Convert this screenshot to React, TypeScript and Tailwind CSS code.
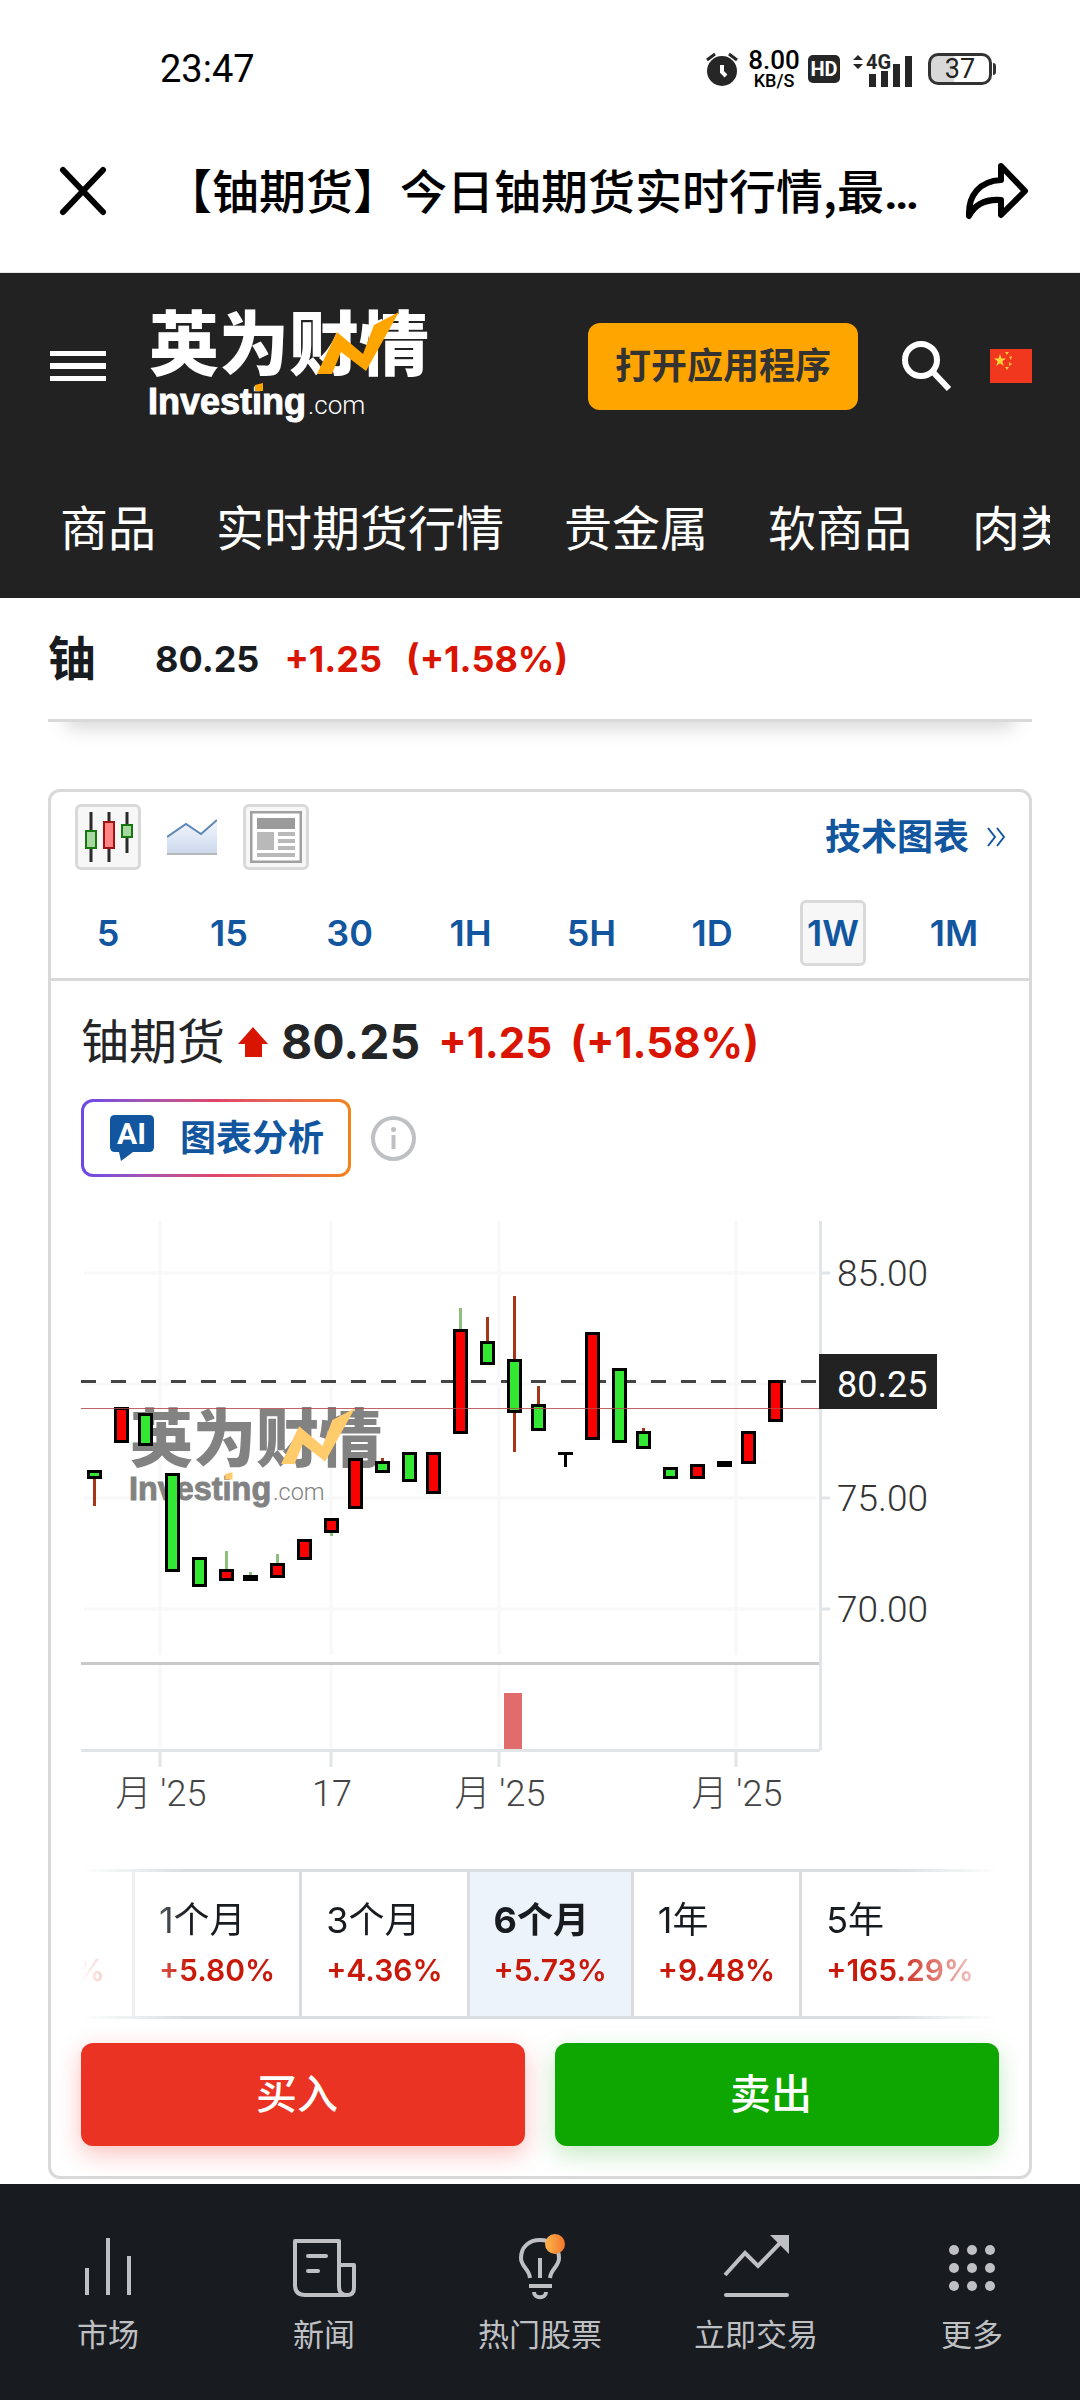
import React from "react";

type Candle = { x: number; top: number; bottom: number; kind: "up" | "down" | "flat"; wickTop?: number; wickBottom?: number; wick?: "green" | "red" | "black" };

const candles: Candle[] = [
  { x: 87, top: 1470, bottom: 1479, kind: "down", wickBottom: 1506, wick: "red" },
  { x: 114, top: 1407, bottom: 1443, kind: "up" },
  { x: 138, top: 1413, bottom: 1446, kind: "down" },
  { x: 165, top: 1473, bottom: 1572, kind: "down" },
  { x: 192, top: 1557, bottom: 1587, kind: "down" },
  { x: 219, top: 1569, bottom: 1581, kind: "up", wickTop: 1551, wick: "green" },
  { x: 243, top: 1575, bottom: 1581, kind: "flat", wickTop: 1572, wick: "green" },
  { x: 270, top: 1563, bottom: 1578, kind: "up", wickTop: 1554, wick: "green" },
  { x: 297, top: 1539, bottom: 1560, kind: "up" },
  { x: 324, top: 1518, bottom: 1533, kind: "up", wickBottom: 1536, wick: "green" },
  { x: 348, top: 1458, bottom: 1509, kind: "up" },
  { x: 375, top: 1461, bottom: 1473, kind: "down", wickTop: 1458, wick: "red" },
  { x: 402, top: 1452, bottom: 1482, kind: "down" },
  { x: 426, top: 1452, bottom: 1494, kind: "up" },
  { x: 453, top: 1329, bottom: 1434, kind: "up", wickTop: 1308, wick: "green" },
  { x: 480, top: 1341, bottom: 1365, kind: "down", wickTop: 1317, wick: "red" },
  { x: 507, top: 1359, bottom: 1413, kind: "down", wickTop: 1296, wickBottom: 1452, wick: "red" },
  { x: 531, top: 1404, bottom: 1431, kind: "down", wickTop: 1386, wick: "red" },
  { x: 558, top: 1452, bottom: 1455, kind: "flat", wickBottom: 1467, wick: "black" },
  { x: 585, top: 1332, bottom: 1440, kind: "up" },
  { x: 612, top: 1368, bottom: 1443, kind: "down" },
  { x: 636, top: 1431, bottom: 1449, kind: "down", wickTop: 1428, wick: "red" },
  { x: 663, top: 1467, bottom: 1479, kind: "down" },
  { x: 690, top: 1464, bottom: 1479, kind: "up" },
  { x: 717, top: 1461, bottom: 1467, kind: "flat" },
  { x: 741, top: 1431, bottom: 1464, kind: "up" },
  { x: 768, top: 1380, bottom: 1422, kind: "up" },
];

const wickColor = { green: "#8fbf7c", red: "#a5361a", black: "#000" };

function LogoArt({ ink, accent }: { ink: string; accent: string }) {
  return (
    <>
      <text x="1" y="65" fontSize="70" fontWeight="900" fill={ink} fontFamily="'Noto Sans CJK SC', sans-serif">
        英为财情
      </text>
      <path d="M169 69L189 27L215 49L226 20L251 7L218 66L193 47L184 69Z" fill={accent} />
      <text x="0" y="109" fontSize="36" fontWeight="700" fill={ink} stroke={ink} strokeWidth="1" fontFamily="'Liberation Sans', sans-serif">
        Investing
      </text>
      <path d="M107 80L115 78V86H107Z" fill={accent} />
      <text x="160" y="109" fontSize="26" fontWeight="300" fill={ink} fontFamily="Roboto, sans-serif">
        .com
      </text>
    </>
  );
}

function StatusBar() {
  return (
    <div className="flex h-[110px] items-center justify-between pt-7 pr-[84px] pl-40 font-[Roboto,sans-serif] text-[#222]">
      <span className="text-[38px] leading-none text-black">23:47</span>
      <div className="flex items-center gap-2">
        <svg className="h-9 w-9" viewBox="0 0 36 36" fill="none" aria-label="闹钟">
          <circle cx="18" cy="20" r="15" fill="#262626" />
          <path d="M18 14V21L22 25" stroke="#fff" strokeWidth="4" />
          <path d="M3 9L11 3M33 9L25 3" stroke="#262626" strokeWidth="3" />
        </svg>
        <div className="flex w-[52px] flex-col items-center font-medium text-black">
          <span className="text-[26px] leading-[24px]">8.00</span>
          <span className="text-lg leading-[18px]">KB/S</span>
        </div>
        <span className="flex h-7 w-8 items-center justify-center rounded-[5px] bg-[#262626] text-xl font-bold text-white">HD</span>
        <svg className="h-9 w-16" viewBox="0 0 64 36" aria-label="4G 信号">
          <path d="M5 9L10 4L15 9ZM5 13L10 18L15 13Z" fill="#262626" />
          <path d="M21 23H28V36H21ZM33 20H40V36H33ZM45 13H52V36H45ZM57 5H64V36H57Z" fill="#262626" />
          <text x="18" y="18" fontSize="20" fontWeight="700" fill="#262626" fontFamily="Roboto, sans-serif">4G</text>
        </svg>
        <div className="ml-2 flex items-center gap-px">
          <div className="flex h-8 w-16 items-center justify-center rounded-[10px] border-3 border-[#333] bg-linear-to-r from-[#d8d8d8] from-40% to-white to-40% text-[27px] leading-none">37</div>
          <div className="h-3 w-[3px] rounded-r bg-[#333]" />
        </div>
      </div>
    </div>
  );
}

function TitleBar() {
  return (
    <div className="flex h-[163px] items-center border-b border-[#e5e5e5] pr-[48px] pl-[57px]">
      <button aria-label="关闭" className="shrink-0">
        <svg className="h-[52px] w-[52px]" viewBox="0 0 52 52" stroke="#000" strokeWidth="6" strokeLinecap="round">
          <path d="M6 5L46 47M46 5L6 47" />
        </svg>
      </button>
      <h1 className="ml-[56px] grow font-['Noto_Sans_CJK_SC',sans-serif] text-[47px] leading-[70px] font-medium whitespace-nowrap text-black">
        【铀期货】今日铀期货实时行情,最<span className="font-[Roboto,sans-serif] font-bold">…</span>
      </h1>
      <button aria-label="分享" className="shrink-0">
        <svg className="h-[60px] w-[68px]" viewBox="0 0 68 60" fill="none" stroke="#000" strokeWidth="6" strokeLinejoin="round">
          <path d="M37 5L61 30L37 54V39C22 38 11 43 5 55C4 34 16 20 37 19Z" />
        </svg>
      </button>
    </div>
  );
}

function SiteHeader() {
  return (
    <header className="bg-[#222] text-white">
      <div className="flex h-[186px] items-center pr-12 pl-[50px]">
        <button aria-label="菜单" className="flex w-14 flex-col gap-[7px]">
          <span className="h-[5px] w-full bg-white" />
          <span className="h-[6px] w-full bg-white" />
          <span className="h-[5px] w-full bg-white" />
        </button>
        <a href="#" aria-label="英为财情 Investing.com" className="ml-[42px]">
          <svg className="h-[122px] w-[280px] overflow-visible" viewBox="0 0 280 122">
            <LogoArt ink="#fff" accent="#ffa500" />
          </svg>
        </a>
        <button className="ml-auto h-[87px] w-[270px] rounded-xl bg-[#ffa500] text-4xl font-bold text-[#333]">打开应用程序</button>
        <button aria-label="搜索" className="ml-[43px]">
          <svg className="h-[52px] w-[52px]" viewBox="0 0 52 52" fill="none" stroke="#fff">
            <circle cx="20" cy="20" r="16" strokeWidth="6" />
            <path d="M32 32L48 49" strokeWidth="6" />
          </svg>
        </button>
        <a href="#" aria-label="中国" className="ml-[37px]">
          <svg className="h-[34px] w-[42px]" viewBox="0 0 42 34">
            <rect width="42" height="34" fill="#f2371f" />
            <path d="M10 5L11.500 9.500H16L12.300 12.200L13.700 17L10 14.200L6.300 17L7.700 12.200L4 9.500H8.500Z" fill="#ffd93b" />
            <g fill="#ffc83b">
              <path d="M15 3L19 3L17 6ZM19 8L22 7L21 11ZM19 13L22 15L19 17ZM15 18L19 18L17 21Z" />
            </g>
          </svg>
        </a>
      </div>
      <nav className="mr-[30px] flex h-[139px] items-center gap-15 overflow-hidden pl-15 text-5xl whitespace-nowrap">
        {["商品", "实时期货行情", "贵金属", "软商品", "肉类"].map((t) => (
          <a href="#" key={t} className="shrink-0 leading-[72px]">{t}</a>
        ))}
      </nav>
    </header>
  );
}

function Ticker() {
  return (
    <div className="mx-12 flex h-[124px] items-center border-b-3 border-[#d9d9d9] text-4xl font-bold shadow-[0_24px_18px_-18px_rgba(0,0,0,0.16)]">
      <span className="text-5xl text-[#181c21]">铀</span>
      <span className="ml-[59px] text-[#181c21]">80.25</span>
      <span className="ml-[25px] text-[#d91400]">+1.25</span>
      <span className="ml-6 text-[#d91400]">(+1.58%)</span>
    </div>
  );
}

function ChartTools() {
  const box = "flex h-[66px] w-[66px] items-center justify-center rounded-md border-3 border-[#d9d9d9] bg-[#f7f7f7]";
  return (
    <div className="border-b-3 border-[#d9d9d9] pt-3 pb-3 pl-6">
      <div className="flex items-center gap-[18px] pr-6">
        <button aria-label="蜡烛图" className={box}>
          <svg className="h-[54px] w-[54px]" viewBox="0 0 54 54">
            <path d="M10 2V52M28 2V52M46 2V43" stroke="#2b2b2b" strokeWidth="3" />
            <g strokeWidth="2">
              <rect x="5" y="21" width="10" height="17" fill="#a8d8a2" stroke="#14780e" />
              <rect x="23" y="12" width="10" height="26" fill="#ff8585" stroke="#a31212" />
              <rect x="41" y="15" width="10" height="12" fill="#a8d8a2" stroke="#14780e" />
            </g>
          </svg>
        </button>
        <button aria-label="面积图" className="flex h-[66px] w-[66px] items-center justify-center">
          <svg className="h-9 w-[50px]" viewBox="0 0 50 36">
            <defs>
              <linearGradient id="area" x1="0" y1="0" x2="0" y2="1">
                <stop offset="0" stopColor="#f4f7fd" />
                <stop offset="1" stopColor="#cdd9ee" />
              </linearGradient>
            </defs>
            <path d="M0 18L19 5L34 15L50 1V34H0Z" fill="url(#area)" />
            <path d="M0 18L19 5L34 15L50 1" fill="none" stroke="#5b87b5" strokeWidth="2" />
            <path d="M0 35H50" stroke="#b8b8b8" strokeWidth="2" />
          </svg>
        </button>
        <button aria-label="新闻" className={box}>
          <svg className="h-[52px] w-[52px]" viewBox="0 0 52 52">
            <rect x="1" y="1" width="50" height="50" fill="#fff" stroke="#a0a0a0" strokeWidth="3" />
            <rect x="7" y="7" width="38" height="11" fill="#9b9b9b" />
            <path d="M7 21H24V39H7ZM28 21H45V25H28ZM28 28H45V32H28ZM28 35H45V39H28ZM7 42H45V46H7Z" fill="#b9b9b9" />
          </svg>
        </button>
        <a href="#" className="ml-auto flex items-center gap-[18px] text-4xl font-bold text-[#1256a0]">
          技术图表
          <svg className="h-5 w-[18px]" viewBox="0 0 18 20" fill="none" stroke="#1256a0" strokeWidth="2">
            <path d="M1 1L8 10L1 19M10 1L17 10L10 19" />
          </svg>
        </a>
      </div>
      <div className="mt-[30px] flex justify-between pr-[42px]">
        {["5", "15", "30", "1H", "5H", "1D", "1W", "1M"].map((t) => (
          <button
            key={t}
            className={
              t === "1W"
                ? "flex h-[66px] w-[66px] items-center justify-center rounded-md border-3 border-[#d9d9d9] bg-[#f7f7f7] text-4xl font-semibold text-[#1256a0]"
                : "flex h-[66px] w-[66px] items-center justify-center text-4xl font-semibold text-[#1256a0]"
            }
          >
            {t}
          </button>
        ))}
      </div>
    </div>
  );
}

function Chart() {
  const ticks = [160, 331, 499, 736];
  const tickLabels = ["月 '25", "17", "月 '25", "月 '25"];
  return (
    <svg className="mt-11 w-full" viewBox="81 1221 918 600" role="img" aria-label="铀期货周线图" fontFamily="Roboto, 'Noto Sans CJK SC', sans-serif">
      <g stroke="#f8f8f9" strokeWidth="3">
        {ticks.map((x) => <path key={x} d={`M${x} 1221V1655M${x} 1665V1749`} />)}
        {[1273, 1384, 1498, 1609].map((y) => <path key={y} d={`M84 ${y}H816`} />)}
      </g>
      <path d="M81 1381.500H819" stroke="#444" strokeWidth="3" strokeDasharray="15 15" />
      <g transform="translate(129 1402) scale(0.9)">
        <LogoArt ink="#828282" accent="#ffcb6b" />
      </g>
      {candles.map((c) => (
        <g key={c.x}>
          {c.wick && (
            <rect x={c.x + 6} y={c.wickTop ?? c.top} width="3" height={(c.wickBottom ?? c.bottom) - (c.wickTop ?? c.top)} fill={wickColor[c.wick]} />
          )}
          <rect x={c.x} y={c.top} width="15" height={c.bottom - c.top} fill="#000" />
          {c.kind !== "flat" && (
            <rect x={c.x + 3} y={c.top + 3} width="9" height={c.bottom - c.top - 6} fill={c.kind === "up" ? "#fb0000" : "#33e833"} />
          )}
        </g>
      ))}
      <path d="M81 1408.500H819" stroke="#b54a4a" strokeOpacity="0.85" strokeWidth="1" />
      <rect x="504" y="1693" width="18" height="56" fill="#e06c6c" />
      <path d="M81 1663.500H819" stroke="#c9c9c9" strokeWidth="3" />
      <path d="M81 1750.500H820M820.500 1221V1750" stroke="#e1e5e8" strokeWidth="3" />
      <g stroke="#e1e5e8" strokeWidth="3">
        {ticks.map((x) => <path key={x} d={`M${x} 1752V1767`} />)}
        {[1273, 1498, 1609].map((y) => <path key={y} d={`M822 ${y}H830`} />)}
      </g>
      <rect x="819" y="1354" width="118" height="55" fill="#222" />
      <g fontSize="37" fontWeight="300" fill="#333">
        <text x="837" y="1286">85.00</text>
        <text x="837" y="1397" fill="#fff" fontSize="36" fontWeight="400">80.25</text>
        <text x="837" y="1511">75.00</text>
        <text x="837" y="1622">70.00</text>
      </g>
      <g fontSize="36" fontWeight="300" fill="#444">
        {ticks.map((x, i) => <text key={x} x={x + 1} y="1806" textAnchor="middle">{tickLabels[i]}</text>)}
      </g>
    </svg>
  );
}

const ranges = [
  { label: "1个月", change: "+5.80%" },
  { label: "3个月", change: "+4.36%" },
  { label: "6个月", change: "+5.73%", active: true },
  { label: "1年", change: "+9.48%" },
  { label: "5年", change: "+165.29%" },
];

function RangeStrip() {
  return (
    <div className="mt-12 flex h-[150px] justify-end overflow-hidden border-y-3 border-[#d9dddf] mask-[linear-gradient(to_right,transparent,black_108px,black_calc(100%-108px),transparent)]">
      <div className="flex shrink-0 items-end border-r-3 border-[#d9dddf] pr-[27px] pb-6 text-3xl leading-[44px] font-semibold text-[#d91400]">%</div>
      {ranges.map((r) => (
        <button
          key={r.label}
          className={
            r.active
              ? "flex shrink-0 flex-col border-r-3 border-[#d9dddf] bg-[#ecf3fa] px-6 pt-5 text-left font-bold"
              : "flex shrink-0 flex-col border-r-3 border-[#d9dddf] px-6 pt-5 text-left last:border-r"
          }
        >
          <span className="text-4xl leading-[56px] text-[#181c21]">{r.label}</span>
          <span className="text-3xl leading-[44px] font-semibold text-[#c9190b]">{r.change}</span>
        </button>
      ))}
    </div>
  );
}

function ChartCard() {
  return (
    <main className="mx-12 mt-[67px] rounded-xl border-3 border-[#d9d9d9]">
      <ChartTools />
      <div className="px-[30px] pb-[30px]">
        <div className="mt-[31px] flex h-[60px] items-center whitespace-nowrap">
          <h2 className="text-5xl text-[#232526]">铀期货</h2>
          <svg className="ml-[13px] h-[30px] w-[30px]" viewBox="0 0 30 30" aria-label="上涨">
            <path d="M15 0L30 17H24V30H7V17H0Z" fill="#d91400" />
          </svg>
          <span className="ml-[13px] text-5xl font-bold text-[#232526]">80.25</span>
          <span className="ml-[18px] text-[42px] font-bold text-[#d91400]">+1.25</span>
          <span className="ml-[18px] text-[42px] font-bold text-[#d91400]">(+1.58%)</span>
        </div>
        <div className="mt-[27px] flex items-center">
          <button className="rounded-xl bg-linear-to-r from-[#6b46ea] via-[#e0446a] to-[#f28315] p-[3px]">
            <span className="flex h-[72px] w-[264px] items-center gap-[26px] rounded-[9px] bg-white pl-[26px] text-4xl font-bold text-[#1256a0]">
              <svg className="h-[46px] w-11" viewBox="0 0 44 46" aria-hidden="true">
                <path d="M5 0H39Q44 0 44 5V32Q44 37 39 37H23L11 46L9 37H5Q0 37 0 32V5Q0 0 5 0Z" fill="#1256a0" />
                <text x="7" y="29" fontSize="30" fontWeight="700" fill="#fff" fontFamily="Roboto, sans-serif">AI</text>
              </svg>
              图表分析
            </span>
          </button>
          <button aria-label="说明" className="ml-5">
            <svg className="h-[45px] w-[45px]" viewBox="0 0 45 45" fill="none">
              <circle cx="22.500" cy="22.500" r="20.500" stroke="#bfc0c4" strokeWidth="4" />
              <circle cx="22.500" cy="13.500" r="2.500" fill="#bfc0c4" />
              <path d="M22.500 19V33" stroke="#bfc0c4" strokeWidth="4" />
            </svg>
          </button>
        </div>
        <Chart />
        <RangeStrip />
        <div className="mt-6 grid grid-cols-2 gap-[30px] text-[41px] font-medium text-white">
          <button className="h-[103px] rounded-xl bg-[#ea3323] pr-3 shadow-[0_8px_24px_rgba(234,51,35,0.3)]">买入</button>
          <button className="h-[103px] rounded-xl bg-[#0ea600] pr-3 shadow-[0_8px_24px_rgba(14,166,0,0.25)]">卖出</button>
        </div>
      </div>
    </main>
  );
}

const tabs = [
  { label: "市场", icon: <path d="M12 34V61M33 4V61M54 22V61" /> },
  {
    label: "新闻",
    icon: (
      <>
        <path d="M4 7H48V53Q48 61 56 61H14Q4 61 4 51Z" strokeLinejoin="round" />
        <path d="M48 31H63V54Q63 61 56 61" strokeLinejoin="round" />
        <path d="M17 22H35M17 37H27" strokeLinecap="round" />
      </>
    ),
  },
  {
    label: "热门股票",
    icon: (
      <>
        <defs>
          <linearGradient id="dot">
            <stop offset="0" stopColor="#fdb64e" />
            <stop offset="1" stopColor="#f4762a" />
          </linearGradient>
        </defs>
        <path d="M23 44C22 34 14 33 14 24C14 13 22 6 33 6C44 6 52 13 52 24C52 33 44 34 43 44M33 24V44" />
        <path d="M22 52H45M27 58C27 65 39 65 39 58" />
        <circle cx="48" cy="10" r="10" fill="url(#dot)" stroke="none" />
      </>
    ),
  },
  {
    label: "立即交易",
    icon: (
      <>
        <path d="M2 41L22 19L35 32L58 8" />
        <path d="M47 1H66V20Z" fill="#bfc0c4" stroke="none" />
        <path d="M3 61H64" strokeLinecap="round" />
      </>
    ),
  },
  {
    label: "更多",
    icon: (
      <g fill="#bfc0c4" stroke="none">
        {[16, 34, 52].map((y) => [15, 33, 51].map((x) => <circle key={`${x}-${y}`} cx={x} cy={y} r="5" />))}
      </g>
    ),
  },
];

export default function App() {
  return (
    <div className="bg-white font-[Inter,'Noto_Sans_CJK_SC',sans-serif]">
      <StatusBar />
      <TitleBar />
      <SiteHeader />
      <Ticker />
      <ChartCard />
      <nav className="mt-[5px] grid h-[216px] grid-cols-5 bg-[#181b20] pt-[50px] text-[31px] text-[#bfc0c4]">
        {tabs.map((t) => (
          <a href="#" key={t.label} className="flex flex-col items-center gap-[15px] leading-10">
            <svg className="h-[66px] w-[66px] overflow-visible" viewBox="0 0 66 66" fill="none" stroke="#bfc0c4" strokeWidth="4" aria-hidden="true">
              {t.icon}
            </svg>
            {t.label}
          </a>
        ))}
      </nav>
    </div>
  );
}
